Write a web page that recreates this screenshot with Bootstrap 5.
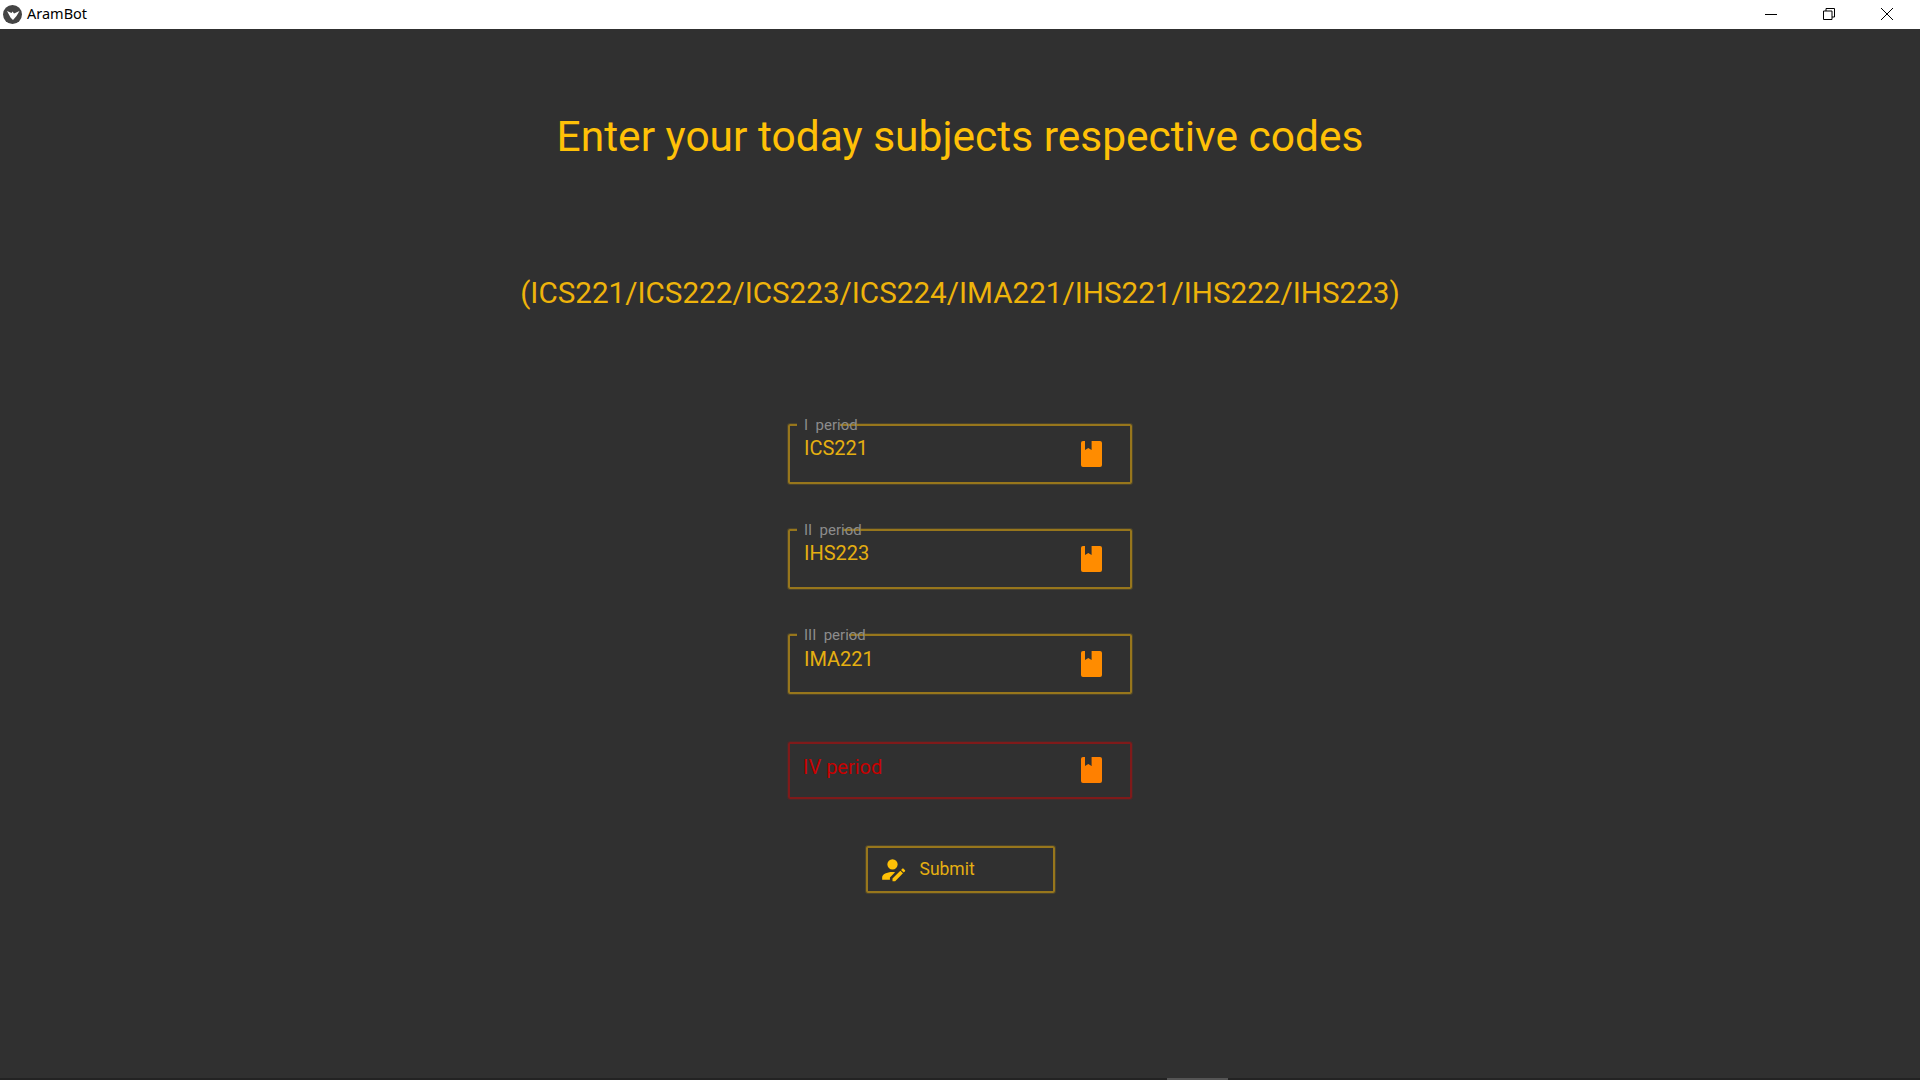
<!DOCTYPE html>
<html lang="en">
<head>
    <meta charset="UTF-8">
    <title>AramBot</title>
    <link rel="stylesheet" href="https://cdn.jsdelivr.net/npm/bootstrap@5.3.0/dist/css/bootstrap.min.css">
    <style>
        html, body { height: 100%; }
        body { background-color: #303030; font-family: Roboto, sans-serif; overflow: hidden; }
        .win-bar { height: 29px; background: #fff; color: #000; font-family: "Noto Sans", sans-serif; font-size: 14.5px; padding-left: 3px; padding-bottom: 1px; }
        .win-logo { width: 19px; height: 19px; margin-right: 5px; }
        .win-btns { width: 174px; margin-right: 4px; }
        .win-btn { width: 58px; height: 27px; }
        .app-main { padding-top: 85px; }
        .app-title { color: #ffc107; font-size: 42.5px; line-height: 46px; margin: 0 0 113px; font-weight: 400; }
        .app-codes { color: #eeb30b; font-size: 29.65px; line-height: 40px; margin: 0 0 111px; }
        .period-box { position: relative; width: 344px; height: 60px; border: 2px solid #97761c; box-shadow: 0 0 0 1px rgba(156, 122, 28, .25); border-radius: 2px; margin-bottom: 45px; color: #e5af11; font-size: 20px; line-height: 24px; padding: 10px 14px 0; }
        .period-box.low { padding-top: 11px; }
        .period-box.bad { height: 57px; margin-top: 3px; margin-bottom: 47px; border-color: #7f1a1a; box-shadow: 0 0 0 1px rgba(127, 26, 26, .25); color: #c80000; padding: 11px 13px 0; }
        .period-box.bad .period-ico { top: 13px; }
        .period-lbl { position: absolute; left: 14px; top: -10px; font-size: 15px; line-height: 18px; color: #8c8c8c; white-space: pre; }
        .period-notch { position: absolute; left: 7px; top: -4px; height: 6px; background: #303030; }
        .period-ico { position: absolute; left: 291px; top: 15px; width: 21px; height: 26px; }
        .go-btn { width: 189px; height: 47px; border: 2px solid #97761c; box-shadow: 0 0 0 1px rgba(156, 122, 28, .25); border-radius: 2px; color: #e5af11; font-size: 17.5px; font-weight: 400; background: none; padding: 0 0 0 9px; gap: 12px; }
        .go-btn:hover { color: #e5af11; }
        .bottom-edge { height: 2px; background: #232323; }
        .bottom-thumb { width: 61px; margin-left: 1167px; background: #555; }
    </style>
</head>
<body class="d-flex flex-column">
    <div class="win-bar d-flex align-items-center flex-shrink-0">
        <svg class="win-logo" viewBox="0 0 19 19">
            <circle cx="9.500" cy="9.500" r="9.500" fill="#444"/>
            <path d="M4 6L8.500 8L9.500 6.500L11 8.500L16.500 6L13.500 11L10 15L7.500 12.500Z" fill="#fff"/>
        </svg>
        <span>AramBot</span>
        <div class="win-btns d-flex ms-auto">
            <div class="win-btn d-flex align-items-center justify-content-center">
                <svg width="12" height="12" viewBox="0 0 12 12"><path d="M0 6.500h12" stroke="#000"/></svg>
            </div>
            <div class="win-btn d-flex align-items-center justify-content-center">
                <svg width="12" height="12" viewBox="0 0 12 12" fill="none" stroke="#000"><path d="M.5 3h8.500v8.500h-8.500zM3 3V.5h8.500v8.500H9"/></svg>
            </div>
            <div class="win-btn d-flex align-items-center justify-content-center">
                <svg width="12" height="12" viewBox="0 0 12 12"><path d="M0 0l12 12M12 0L0 12" stroke="#000"/></svg>
            </div>
        </div>
    </div>

    <main class="app-main flex-grow-1 d-flex flex-column align-items-center">
        <h1 class="app-title text-center">Enter your today subjects respective codes</h1>
        <p class="app-codes text-center">(ICS221/ICS222/ICS223/ICS224/IMA221/IHS221/IHS222/IHS223)</p>

        <div class="period-box">
            <span class="period-notch" style="width: 43px"></span>
            <span class="period-lbl">I  period</span>
            ICS221
            <svg class="period-ico" viewBox="0 0 21 26"><path d="M2 0h2v9l3.300-2 3.300 2V0H19a2 2 0 0 1 2 2v22a2 2 0 0 1-2 2H2a2 2 0 0 1-2-2V2a2 2 0 0 1 2-2z" fill="#ff8c00"/></svg>
        </div>
        <div class="period-box">
            <span class="period-notch" style="width: 46px"></span>
            <span class="period-lbl">II  period</span>
            IHS223
            <svg class="period-ico" viewBox="0 0 21 26"><path d="M2 0h2v9l3.300-2 3.300 2V0H19a2 2 0 0 1 2 2v22a2 2 0 0 1-2 2H2a2 2 0 0 1-2-2V2a2 2 0 0 1 2-2z" fill="#ff8c00"/></svg>
        </div>
        <div class="period-box low">
            <span class="period-notch" style="width: 52px"></span>
            <span class="period-lbl">III  period</span>
            IMA221
            <svg class="period-ico" viewBox="0 0 21 26"><path d="M2 0h2v9l3.300-2 3.300 2V0H19a2 2 0 0 1 2 2v22a2 2 0 0 1-2 2H2a2 2 0 0 1-2-2V2a2 2 0 0 1 2-2z" fill="#ff8c00"/></svg>
        </div>
        <div class="period-box bad">
            IV period
            <svg class="period-ico" viewBox="0 0 21 26"><path d="M2 0h2v9l3.300-2 3.300 2V0H19a2 2 0 0 1 2 2v22a2 2 0 0 1-2 2H2a2 2 0 0 1-2-2V2a2 2 0 0 1 2-2z" fill="#ff8000"/></svg>
        </div>

        <button type="button" class="btn go-btn d-flex align-items-center">
            <svg width="31" height="31" viewBox="0 0 24 24" fill="#ffc107"><path d="M21.700 13.350L20.700 14.350L18.650 12.300L19.650 11.300C19.860 11.090 20.210 11.090 20.420 11.300L21.700 12.580C21.910 12.790 21.910 13.140 21.700 13.350M12 18.940L18.060 12.880L20.110 14.930L14.060 21H12V18.940M12 14C7.580 14 4 15.790 4 18V20H10V18.110L14 14.110C13.340 14.030 12.670 14 12 14M12 4A4 4 0 0 0 8 8A4 4 0 0 0 12 12A4 4 0 0 0 16 8A4 4 0 0 0 12 4Z"/></svg>
            Submit
        </button>
    </main>

    <div class="bottom-edge flex-shrink-0"><div class="bottom-thumb h-100"></div></div>

    <script src="https://cdn.jsdelivr.net/npm/bootstrap@5.3.0/dist/js/bootstrap.bundle.min.js"></script>
</body>
</html>
